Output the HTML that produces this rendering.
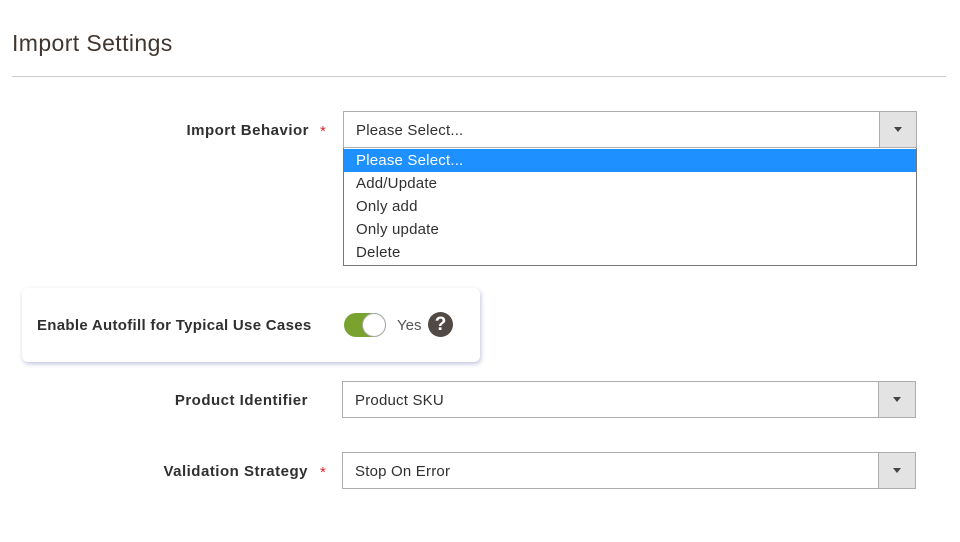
<!DOCTYPE html>
<html><head><style>
body{margin:0;width:960px;height:542px;background:#fff;font-family:"Liberation Sans",sans-serif;color:#303030;position:relative;overflow:hidden}
.a{position:absolute}
h1{position:absolute;left:12px;top:30px;margin:0;font-weight:normal;font-size:23px;letter-spacing:0.4px;color:#41362f}
.hr{left:12px;top:76px;width:934px;height:1px;background:#ccc}
.lbl{font-size:15px;font-weight:bold;color:#303030;text-align:right;width:300px;letter-spacing:0.5px}
.star{color:#e22626;font-size:15px}
.sel{border:1px solid #adadad;height:34px;box-sizing:border-box;font-size:15px;line-height:34px;padding-left:12px;background:#fff;letter-spacing:0.2px}
.btn{position:absolute;right:0;top:0;width:36px;height:100%;background:#e3e3e3;border-left:1px solid #adadad}
.btn:after{content:"";position:absolute;left:14px;top:15px;border-left:4px solid transparent;border-right:4px solid transparent;border-top:5px solid #444}
.dd div{padding-left:12px;letter-spacing:0.2px}
</style></head><body>
<h1>Import Settings</h1>
<div class="a hr"></div>
<div class="a lbl" style="left:9px;top:122px">Import Behavior</div><div class="a star" style="left:320px;top:123px">*</div>
<div class="a sel" style="left:343px;top:111px;width:574px;height:37px;line-height:37px">Please Select...<div class="btn"></div></div>
<div class="a dd" style="left:343px;top:148px;width:574px;height:118px;box-sizing:border-box;border:1px solid #777;border-top:none;font-size:15px;line-height:23px;background:#fff;padding-top:1px">
<div style="background:#1e90ff;color:#fff">Please Select...</div>
<div>Add/Update</div><div>Only add</div><div>Only update</div><div>Delete</div></div>
<div class="a" style="left:22px;top:288px;width:458px;height:74px;border-radius:6px;background:#fff;box-shadow:1px 2px 5px rgba(80,90,160,.35)"></div>
<div class="a" style="left:37px;top:317px;font-size:15px;font-weight:bold;letter-spacing:0.3px">Enable Autofill for Typical Use Cases</div>
<div class="a" style="left:344px;top:313px;width:42px;height:24px;border-radius:12px;background:#79a22e"></div>
<div class="a" style="left:362px;top:313px;width:22px;height:22px;border-radius:50%;background:#fff;border:1px solid #aaa"></div>
<div class="a" style="left:397px;top:317px;font-size:15px;color:#555">Yes</div>
<div class="a" style="left:428px;top:312px;width:25px;height:25px;border-radius:50%;background:#514943;color:#fff;font-weight:bold;font-size:19px;text-align:center;line-height:25px">?</div>
<div class="a lbl" style="left:8px;top:392px">Product Identifier</div>
<div class="a sel" style="left:342px;top:381px;width:574px;height:37px;line-height:37px">Product SKU<div class="btn"></div></div>
<div class="a lbl" style="left:8px;top:463px">Validation Strategy</div><div class="a star" style="left:320px;top:464px">*</div>
<div class="a sel" style="left:342px;top:452px;width:574px;height:37px;line-height:37px">Stop On Error<div class="btn"></div></div>
</body></html>
